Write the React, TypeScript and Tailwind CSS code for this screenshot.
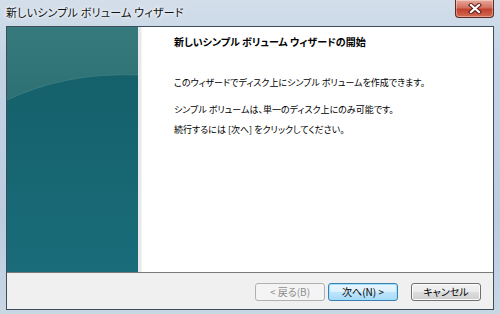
import React from 'react';

const jp = "font-['Meiryo_UI','Noto_Sans_CJK_JP',sans-serif] [font-feature-settings:'palt']";

function CloseButton() {
  return (
    <div className="absolute left-[455px] top-0 w-[39px] h-[18px] rounded-b-[4px] border border-t-0 border-[#5e2a26] bg-[linear-gradient(#e9a99b,#d2705f_45%,#c2412f_55%,#d56b52)] shadow-[inset_0_0_0_1px_rgba(255,255,255,0.35)] flex items-center justify-center">
      <svg width="14" height="11" viewBox="0 0 14 11">
        <path d="M3 2 L11 9 M11 2 L3 9" stroke="#5a1f1a" strokeWidth="4.2" strokeLinecap="square" />
        <path d="M3 2 L11 9 M11 2 L3 9" stroke="#ffffff" strokeWidth="2.2" strokeLinecap="square" />
      </svg>
    </div>
  );
}

function TealPanel() {
  return (
    <div className="w-[131px] h-full border-r border-[#2f4f55] bg-[#17656e]">
      <svg width="131" height="245" viewBox="0 0 131 245" preserveAspectRatio="none" className="block">
        <defs>
          <linearGradient id="top" x1="0" y1="0" x2="0" y2="1">
            <stop offset="0" stopColor="#377a7d" />
            <stop offset="1" stopColor="#2e7174" />
          </linearGradient>
          <linearGradient id="bottom" x1="0" y1="0" x2="0" y2="1">
            <stop offset="0" stopColor="#145e67" />
            <stop offset="0.5" stopColor="#166571" />
            <stop offset="1" stopColor="#1a6c7a" />
          </linearGradient>
        </defs>
        <rect x="0" y="0" width="131" height="245" fill="url(#bottom)" />
        <path d="M0 0 H131 V48 Q60 45 0 73 Z" fill="url(#top)" />
        <path d="M0 73 Q60 45 131 48" stroke="#4a8a8c" strokeWidth="1" fill="none" opacity="0.5" />
      </svg>
    </div>
  );
}

function WizButton({ label, disabled, focused }: { label: string; disabled?: boolean; focused?: boolean }) {
  return (
    <div
      className={
        'h-[18px] w-[70px] rounded-[3px] border flex items-center justify-center text-[10px] leading-none ' +
        (disabled
          ? 'border-[#adb2b5] bg-[#f4f4f4] text-[#8d8d8d]'
          : focused
          ? 'border-[#3c7fb1] bg-[linear-gradient(#eaf6fd,#d9f0fc_50%,#bee6fd_50%,#a7d9f5)] text-black shadow-[inset_0_0_0_1px_#9fe0ff]'
          : 'border-[#707070] bg-[linear-gradient(#f2f2f2,#ebebeb_50%,#dddddd_50%,#cfcfcf)] text-black shadow-[inset_0_0_0_1px_#fcfcfc]')
      }
    >
      {label}
    </div>
  );
}

export default function App() {
  return (
    <div className={'relative w-[500px] h-[314px] overflow-hidden bg-[linear-gradient(180deg,#d3deea,#c3d3e4_20%,#bccde0_70%,#c9d6e4)] ' + jp}>
      {/* title bar */}
      <div className="h-[26px] flex items-center pl-[6px] pb-[2px]">
        <span className="text-[11px] text-[#111] tracking-[0.2px] [text-shadow:0_0_6px_#ffffff,0_0_3px_#ffffff]">
          新しいシンプル ボリューム ウィザード
        </span>
      </div>
      <CloseButton />

      {/* client area */}
      <div className="ml-[6px] mr-[6px] h-[284px] border border-[#3e4d5c] flex flex-col bg-white">
        <div className="h-[245px] flex">
          <TealPanel />
          <div className="w-[4px] h-full bg-[#e9e9e9] border-r border-[#f4f4f4]" />
          <div className="flex-1 pl-[32px] pt-[8px] text-black">
            <div className="text-[10px] font-bold leading-[14px]">新しいシンプル ボリューム ウィザードの開始</div>
            <div className="mt-[27px] text-[9px] leading-[14px]">
              このウィザードでディスク上にシンプル ボリュームを作成できます。
            </div>
            <div className="mt-[10px] text-[9px] leading-[20px]">
              <div>シンプル ボリュームは、単一のディスク上にのみ可能です。</div>
              <div>続行するには [次へ] をクリックしてください。</div>
            </div>
          </div>
        </div>
        <div className="flex-1 border-t border-[#7a7a7a] bg-[#f0f0f0] flex items-start justify-end pt-[10px] pr-[12px]">
          <WizButton label="< 戻る(B)" disabled />
          <div className="w-[3px]" />
          <WizButton label="次へ(N) >" focused />
          <div className="w-[13px]" />
          <WizButton label="キャンセル" />
        </div>
      </div>
    </div>
  );
}
